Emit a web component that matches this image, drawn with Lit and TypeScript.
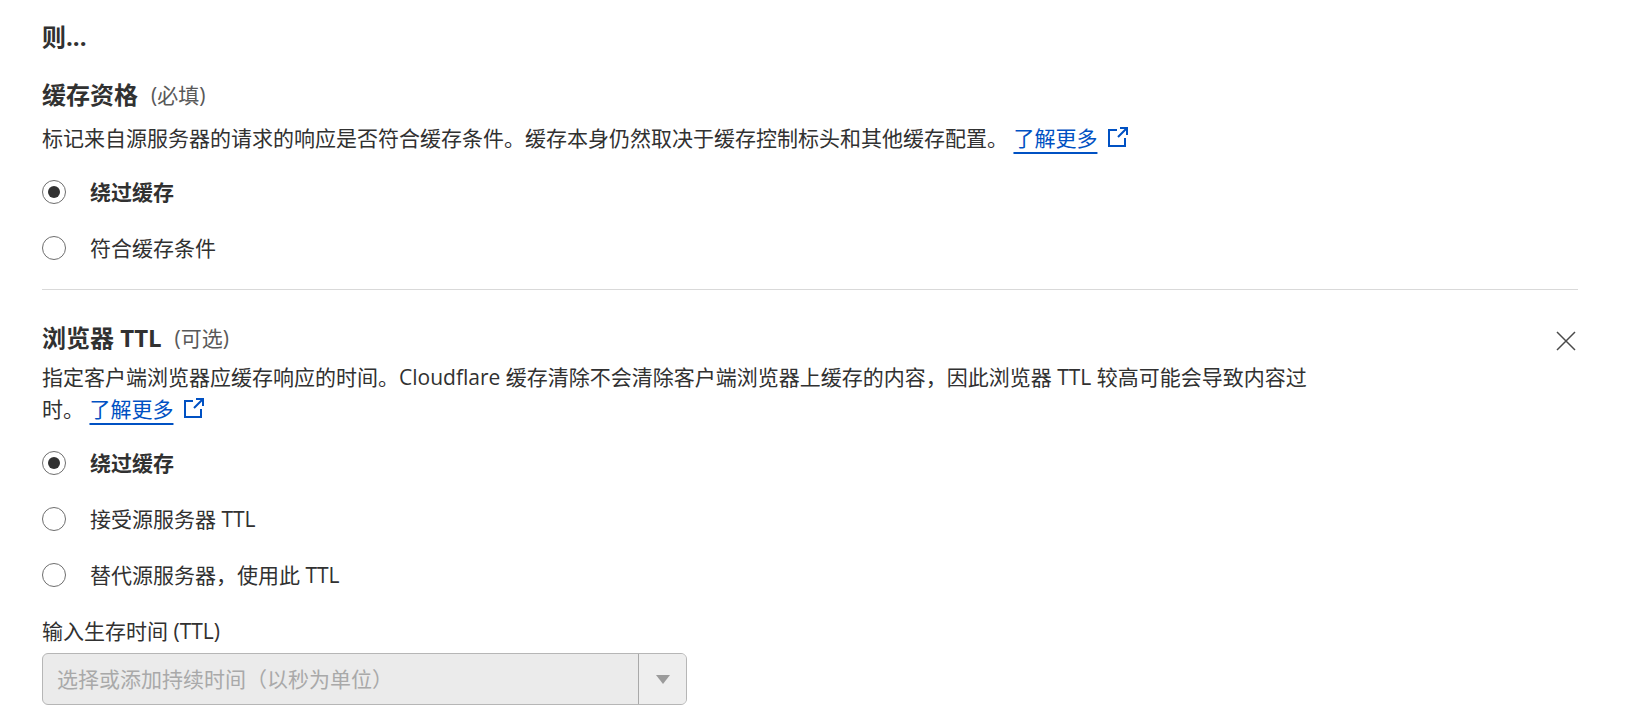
import { LitElement, html, css, svg } from "lit";
import { customElement, property } from "lit/decorators.js";

interface Option {
  value: string;
  label: string;
}

@customElement("learn-more-link")
class LearnMoreLink extends LitElement {
  static styles = css`
    :host {
      white-space: nowrap;
    }
    .link {
      color: #0051c3;
      text-decoration: none;
    }
    .text {
      text-decoration: underline 2px;
      text-underline-offset: 6px;
      text-decoration-skip-ink: none;
    }
    .icon {
      width: 20px;
      height: 20px;
      margin-left: 11px;
      vertical-align: -1px;
    }
  `;

  render() {
    return html`<a class="link" href="#"><span class="text">了解更多</span><svg
        class="icon" viewBox="0 0 20 20" fill="none" stroke="currentColor" stroke-width="2" aria-hidden="true">
        ${svg`<path d="M9 3H1V19H17V11" /><path d="M12 1H19V8M19 1L10 10" />`}
      </svg></a>`;
  }
}

@customElement("radio-list")
class RadioList extends LitElement {
  @property() name = "";
  @property() legend = "";
  @property() value = "";
  @property({ attribute: false }) options: Option[] = [];

  static styles = css`
    :host {
      display: block;
    }
    .group {
      display: flex;
      flex-direction: column;
      align-items: flex-start;
      gap: 24px;
      margin: 0;
      padding: 0;
      border: 0;
      min-width: 0;
    }
    .option {
      display: flex;
      align-items: center;
      gap: 24px;
      line-height: 32px;
      cursor: pointer;
    }
    .option:has(:checked) {
      font-weight: 700;
    }
    .radio {
      appearance: none;
      display: grid;
      place-items: center;
      flex: none;
      width: 24px;
      height: 24px;
      margin: 0;
      border: 1px solid #6e6e6e;
      border-radius: 50%;
      background: #fff;
    }
    .radio:checked::before {
      content: "";
      width: 12px;
      height: 12px;
      border-radius: 50%;
      background: #313131;
    }
  `;

  render() {
    return html`<fieldset class="group" aria-label=${this.legend}>
      ${this.options.map(
        (o) => html`<label class="option">
          <input class="radio" type="radio" name=${this.name} .value=${o.value}
            ?checked=${o.value === this.value}
            @change=${() => (this.value = o.value)} />
          <span>${o.label}</span>
        </label>`
      )}
    </fieldset>`;
  }
}

@customElement("app-root")
class AppRoot extends LitElement {
  static styles = css`
    :host {
      display: block;
      padding: 19px 70px 14px 42px;
      background: #fff;
      color: #313131;
      font-family: "Open Sans", "Noto Sans CJK SC", sans-serif;
      font-size: 21px;
      line-height: 32px;
    }
    *,
    *::before {
      box-sizing: border-box;
    }
    .title,
    .heading {
      margin: 0;
      font-size: 24px;
      line-height: 36px;
      font-weight: 700;
    }
    .title {
      margin-bottom: 22px;
    }
    .head {
      display: flex;
      align-items: center;
      gap: 13px;
    }
    .note {
      color: #595959;
    }
    .text {
      margin: 9px 0 22px;
    }
    .section + .section {
      margin-top: 25px;
      padding-top: 30px;
      border-top: 1px solid #d9d9d9;
    }
    .row {
      display: grid;
      grid-template-columns: 5fr 1fr;
      align-items: start;
    }
    .row .text {
      margin-top: 5px;
    }
    .close {
      justify-self: end;
      display: grid;
      margin: 11px 2px 0 0;
      padding: 0;
      border: 0;
      background: none;
      color: #4a4a4a;
      cursor: pointer;
    }
    .close svg {
      width: 20px;
      height: 20px;
    }
    .label {
      display: block;
      margin: 24px 0 6px;
    }
    .combo {
      display: flex;
      width: 645px;
      max-width: 100%;
      height: 52px;
      border: 1px solid #b6b6b6;
      border-radius: 6px;
      overflow: hidden;
      background: #ebebeb;
    }
    .input {
      flex: 1;
      min-width: 0;
      padding: 0 14px;
      border: 0;
      background: transparent;
      font: inherit;
    }
    .input::placeholder {
      color: #a9a9a9;
      opacity: 1;
    }
    .toggle {
      display: grid;
      place-items: center;
      width: 48px;
      padding: 0;
      border: 0;
      border-left: 1px solid #a9a9a9;
      background: #eee;
      color: #9b9b9b;
    }
    .toggle svg {
      width: 14px;
      height: 9px;
    }
  `;

  render() {
    return html`
      <h2 class="title">则...</h2>
      <section class="section">
        <div class="head">
          <h3 class="heading">缓存资格</h3>
          <span class="note">(必填)</span>
        </div>
        <p class="text">
          标记来自源服务器的请求的响应是否符合缓存条件。缓存本身仍然取决于缓存控制标头和其他缓存配置。
          <learn-more-link></learn-more-link>
        </p>
        <radio-list
          name="eligibility"
          legend="缓存资格"
          value="bypass"
          .options=${[
            { value: "bypass", label: "绕过缓存" },
            { value: "eligible", label: "符合缓存条件" },
          ]}
        ></radio-list>
      </section>
      <section class="section">
        <div class="row">
          <div>
            <div class="head">
              <h3 class="heading">浏览器 TTL</h3>
              <span class="note">(可选)</span>
            </div>
            <p class="text">
              指定客户端浏览器应缓存响应的时间。Cloudflare
              缓存清除不会清除客户端浏览器上缓存的内容，因此浏览器 TTL
              较高可能会导致内容过时。
              <learn-more-link></learn-more-link>
            </p>
          </div>
          <button class="close" type="button" aria-label="关闭">
            <svg viewBox="0 0 20 20" fill="none" stroke="currentColor" stroke-width="1.5" aria-hidden="true">
              <path d="M1 1L19 19M19 1L1 19" />
            </svg>
          </button>
        </div>
        <radio-list
          name="browser-ttl"
          legend="浏览器 TTL"
          value="bypass"
          .options=${[
            { value: "bypass", label: "绕过缓存" },
            { value: "respect", label: "接受源服务器 TTL" },
            { value: "override", label: "替代源服务器，使用此 TTL" },
          ]}
        ></radio-list>
        <label class="label" for="ttl">输入生存时间 (TTL)</label>
        <div class="combo">
          <input id="ttl" class="input" type="text" placeholder="选择或添加持续时间（以秒为单位）" disabled />
          <button class="toggle" type="button" aria-label="展开" disabled>
            <svg viewBox="0 0 14 9" fill="currentColor" aria-hidden="true"><path d="M0 0H14L7 9Z" /></svg>
          </button>
        </div>
      </section>
    `;
  }
}
